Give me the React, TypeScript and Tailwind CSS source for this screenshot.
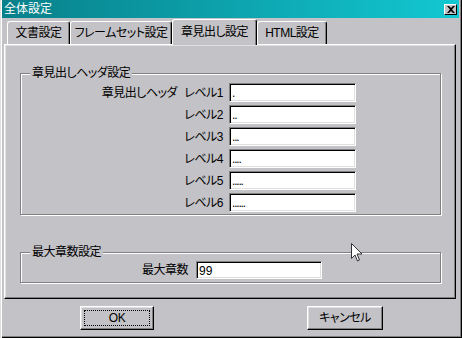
import React from 'react';

const levels = ['.', '..', '...', '....', '.....', '......'];

const tabs = [
  { label: '文書設定', w: 'w-[63px]', active: false },
  { label: 'フレームセット設定', w: 'w-[102px]', active: false },
  { label: '章見出し設定', w: 'w-[85px]', active: true },
  { label: 'HTML設定', w: 'w-[70px]', active: false },
];

function Field({ value, className }: { value: string; className: string }) {
  return (
    <input
      readOnly
      value={value}
      className={`bg-white border border-[#808080] border-b-white border-r-white pl-[2px] pt-[1px] text-[12px] leading-none text-black outline-none shadow-[inset_1px_1px_0_#000,inset_-1px_-1px_0_#dfdfdf] ${className}`}
    />
  );
}

function GroupBox({ title, className, children }: { title: string; className: string; children: React.ReactNode }) {
  return (
    <div className={`relative border border-[#808080] shadow-[1px_1px_0_#fff,inset_1px_1px_0_#fff] ${className}`}>
      <span className="absolute left-[9px] -top-[9px] px-[2px] leading-[16px] bg-[#c3c2c6]">{title}</span>
      {children}
    </div>
  );
}

function Button({ label, focused, className }: { label: string; focused?: boolean; className: string }) {
  return (
    <button
      type="button"
      className={`h-[24px] p-[3px] border border-white border-r-black border-b-black shadow-[inset_-1px_-1px_0_#808080,inset_1px_1px_0_#dfdfdf] ${className}`}
    >
      <div className={`h-full flex items-center justify-center border border-dotted ${focused ? 'border-black' : 'border-transparent'}`}>
        {label}
      </div>
    </button>
  );
}

function Cursor() {
  return (
    <svg className="absolute left-[351px] top-[243px]" width="12" height="19" viewBox="0 0 12 19">
      <path d="M0.5 0.5 L0.5 15.5 L4 12 L6.5 18 L8.5 17 L6 11 L11 11 Z" fill="#fff" stroke="#333" strokeWidth="1" />
    </svg>
  );
}

export default function App() {
  return (
    <div className="relative w-[462px] h-[338px] bg-[#c3c2c6] pl-[2px] pr-[3px] pb-[3px] flex flex-col text-[12px] text-black tracking-[-0.5px] font-['Liberation_Sans','Noto_Sans_CJK_JP',sans-serif] [font-feature-settings:'palt'] shadow-[inset_1px_0_0_#dfdfdf,inset_2px_0_0_#fff,inset_-1px_-1px_0_#000,inset_-2px_-2px_0_#808080]">
      <div className="h-[18px] flex items-center justify-between pl-[2px] bg-gradient-to-r from-[#08808a] to-[#12c8d2] text-white tracking-normal">
        <span className="leading-none">全体設定</span>
        <div className="w-[13px] h-[11px] mr-[2px] bg-[#c3c2c6] flex items-center justify-center border border-white border-r-black border-b-black">
          <svg width="8" height="7" viewBox="0 0 8 7">
            <path d="M0 0h2l2 2 2-2h2L5 3.5 8 7H6L4 5 2 7H0l3-3.5z" fill="#000" />
          </svg>
        </div>
      </div>

      <div className="flex items-end h-[25px] mt-[1px] pl-[5px]">
        {tabs.map((t) => (
          <div
            key={t.label}
            className={`${t.w} flex justify-center border-t border-l border-white border-r border-r-black rounded-tl-[3px] rounded-tr-[3px] shadow-[inset_-1px_0_0_#808080] bg-[#c3c2c6] ${t.active ? 'h-[26px] -mb-[1px] pt-[4px] relative z-10' : 'h-[23px] pt-[3px]'}`}
          >
            <span className="leading-[16px]">{t.label}</span>
          </div>
        ))}
      </div>

      <div className="ml-[2px] h-[255px] w-[452px] border border-white border-r-black border-b-black shadow-[inset_-1px_-1px_0_#808080,inset_1px_1px_0_#dfdfdf] flex flex-col">
        <GroupBox title="章見出しヘッダ設定" className="ml-[15px] mt-[28px] w-[421px] h-[142px] pt-[9px]">
          <div className="flex flex-col gap-[3px]">
            {levels.map((v, i) => (
              <div key={v} className="flex items-center h-[19px]">
                <span className="w-[156px] text-right">{i === 0 ? '章見出しヘッダ' : ''}</span>
                <span className="w-[46px] text-right">{`レベル${i + 1}`}</span>
                <Field value={v} className="ml-[6px] w-[127px] h-[19px] tracking-[-1.2px]" />
              </div>
            ))}
          </div>
        </GroupBox>

        <GroupBox title="最大章数設定" className="ml-[15px] mt-[37px] w-[421px] h-[31px] pt-[8px]">
          <div className="flex items-center h-[18px]">
            <span className="w-[167px] text-right">最大章数</span>
            <Field value="99" className="ml-[8px] w-[126px] h-[18px] tracking-normal" />
          </div>
        </GroupBox>
      </div>

      <div className="flex mt-[7px]">
        <Button label="OK" focused className="ml-[78px] w-[74px]" />
        <Button label="キャンセル" className="ml-[153px] w-[76px]" />
      </div>

      <Cursor />
    </div>
  );
}
